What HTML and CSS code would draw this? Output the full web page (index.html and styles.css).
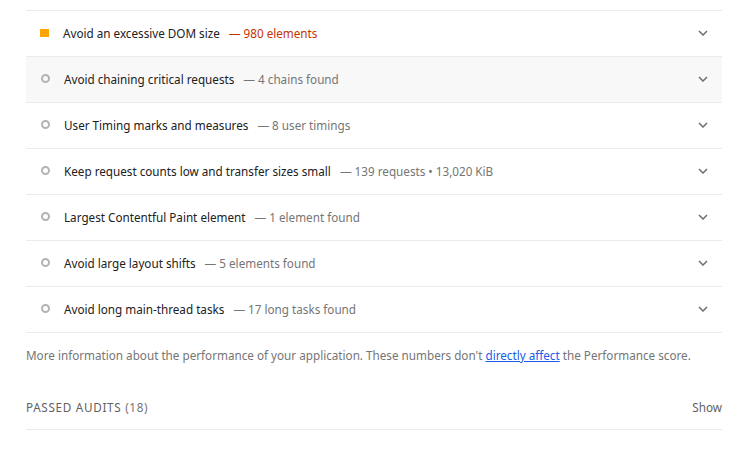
FILE: index.html
```html
<!DOCTYPE html>
<html>
<head>
<meta charset="utf-8">
<link rel="stylesheet" href="styles.css">
</head>
<body>
<div class="group">
  <div class="audit">
    <span class="icon square"></span>
    <span class="title">Avoid an excessive DOM size</span>
    <span class="value warn">— 980 elements</span>
    <span class="chev"><svg width="10" height="6" viewBox="0 0 10 6"><path d="M1 1 L5 5 L9 1" fill="none" stroke="#6e6e6e" stroke-width="1.5"/></svg></span>
  </div>
  <div class="audit hover">
    <span class="icon circle"></span>
    <span class="title">Avoid chaining critical requests</span>
    <span class="value">— 4 chains found</span>
    <span class="chev"><svg width="10" height="6" viewBox="0 0 10 6"><path d="M1 1 L5 5 L9 1" fill="none" stroke="#6e6e6e" stroke-width="1.5"/></svg></span>
  </div>
  <div class="audit">
    <span class="icon circle"></span>
    <span class="title">User Timing marks and measures</span>
    <span class="value">— 8 user timings</span>
    <span class="chev"><svg width="10" height="6" viewBox="0 0 10 6"><path d="M1 1 L5 5 L9 1" fill="none" stroke="#6e6e6e" stroke-width="1.5"/></svg></span>
  </div>
  <div class="audit">
    <span class="icon circle"></span>
    <span class="title">Keep request counts low and transfer sizes small</span>
    <span class="value">— 139 requests • 13,020 KiB</span>
    <span class="chev"><svg width="10" height="6" viewBox="0 0 10 6"><path d="M1 1 L5 5 L9 1" fill="none" stroke="#6e6e6e" stroke-width="1.5"/></svg></span>
  </div>
  <div class="audit">
    <span class="icon circle"></span>
    <span class="title">Largest Contentful Paint element</span>
    <span class="value">— 1 element found</span>
    <span class="chev"><svg width="10" height="6" viewBox="0 0 10 6"><path d="M1 1 L5 5 L9 1" fill="none" stroke="#6e6e6e" stroke-width="1.5"/></svg></span>
  </div>
  <div class="audit">
    <span class="icon circle"></span>
    <span class="title">Avoid large layout shifts</span>
    <span class="value">— 5 elements found</span>
    <span class="chev"><svg width="10" height="6" viewBox="0 0 10 6"><path d="M1 1 L5 5 L9 1" fill="none" stroke="#6e6e6e" stroke-width="1.5"/></svg></span>
  </div>
  <div class="audit">
    <span class="icon circle"></span>
    <span class="title">Avoid long main-thread tasks</span>
    <span class="value">— 17 long tasks found</span>
    <span class="chev"><svg width="10" height="6" viewBox="0 0 10 6"><path d="M1 1 L5 5 L9 1" fill="none" stroke="#6e6e6e" stroke-width="1.5"/></svg></span>
  </div>
  <p class="note">More information about the performance of your application. These numbers don't <a href="#">directly affect</a> the Performance score.</p>
  <div class="passed">
    <span class="passed-title">PASSED AUDITS <span class="count">(18)</span></span>
    <span class="show">Show</span>
  </div>
</div>
</body>
</html>
```

FILE: styles.css
```css
* { box-sizing: border-box; }
body {
  margin: 0;
  background: #fff;
  font-family: "Noto Sans", "Noto Sans CJK KR", sans-serif;
  font-size: 11.7px;
  color: #212121;
}
.group {
  margin: 10px 21px 0 26px;
  border-top: 1px solid #ebebeb;
}
.audit {
  display: flex;
  align-items: center;
  height: 46px;
  border-bottom: 1px solid #ebebeb;
  padding: 0 14px 2px 14px;
}
.audit.hover { background: #f8f8f8; }
.icon {
  width: 9px;
  height: 9px;
  flex: none;
  margin-right: 14px;
}
.square { background: #ffa400; width: 9px; height: 8px; }
.circle {
  border: 2px solid #b3b3b3;
  border-radius: 50%;
  margin-left: 1px;
  margin-right: 14px;
}
.title { color: #212121; }
.value { color: #757575; margin-left: 9px; }
.value.warn { color: #c33300; }
.chev { margin-left: auto; display: flex; }
.note {
  margin: 13px 0 0 0;
  color: #757575;
  line-height: 18px;
}
.note a { color: #1a5ce8; text-decoration: underline; }
.passed {
  display: flex;
  justify-content: space-between;
  align-items: center;
  margin-top: 35px;
  padding-bottom: 14px;
  border-bottom: 1px solid #ebebeb;
  color: #616161;
}
.passed-title { letter-spacing: 0.7px; }
.count { color: #757575; }
.show { color: #616161; }
```
